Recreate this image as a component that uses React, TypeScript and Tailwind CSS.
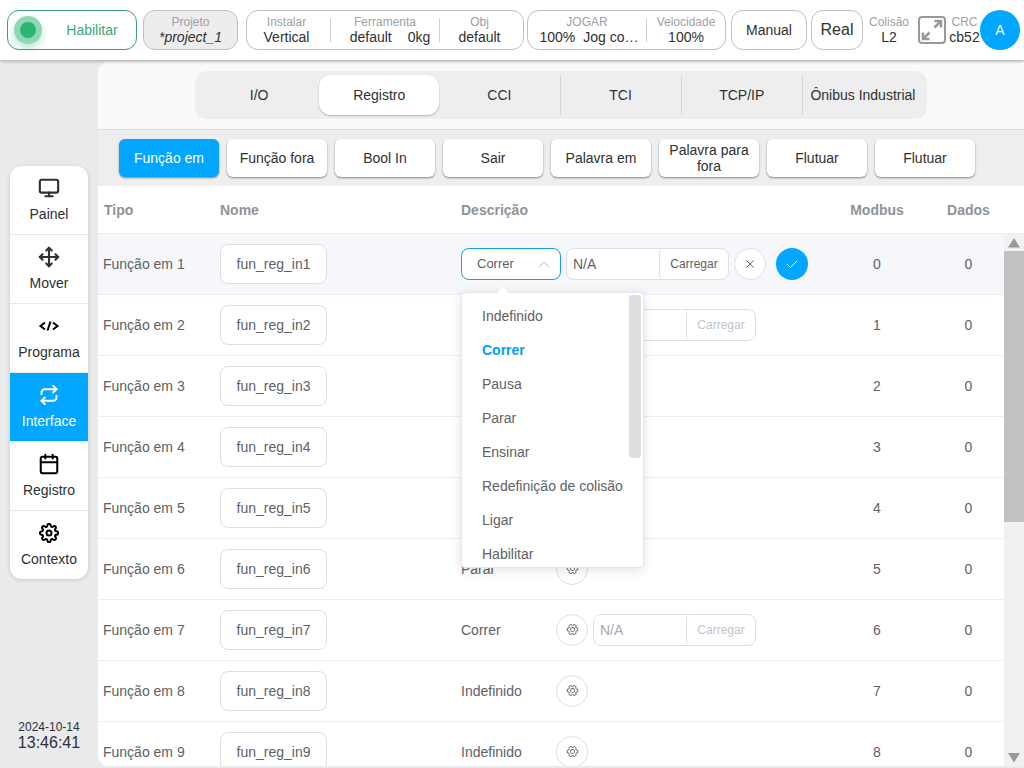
import { useState } from 'react'
import type { ReactNode } from 'react'
import { FiCalendar, FiMonitor, FiMove, FiRepeat, FiSettings } from 'react-icons/fi'

interface Register {
  id: number
  func?: string
  loadable?: boolean
}

const registers: Register[] = [
  { id: 1, func: 'Correr', loadable: true },
  { id: 2, loadable: true },
  { id: 3 },
  { id: 4 },
  { id: 5 },
  { id: 6, func: 'Parar' },
  { id: 7, func: 'Correr', loadable: true },
  { id: 8, func: 'Indefinido' },
  { id: 9, func: 'Indefinido' },
]

const functions = [
  'Indefinido',
  'Correr',
  'Pausa',
  'Parar',
  'Ensinar',
  'Redefinição de colisão',
  'Ligar',
  'Habilitar',
]

const mainTabs = ['I/O', 'Registro', 'CCI', 'TCI', 'TCP/IP', 'Ônibus Industrial']

const subTabs = [
  'Função em',
  'Função fora',
  'Bool In',
  'Sair',
  'Palavra em',
  'Palavra para fora',
  'Flutuar',
  'Flutuar',
]

function CodeIcon() {
  return (
    <svg width="22" height="22" viewBox="0 0 22 22" fill="none" stroke="#000" strokeWidth="2">
      <path d="M7 7.500 2.500 11 7 14.500M15 7.500l4.500 3.500-4.500 3.500M12.500 6.500l-3 9" />
    </svg>
  )
}

const navItems = [
  { label: 'Painel', icon: <FiMonitor size={22} strokeWidth={2.3} /> },
  { label: 'Mover', icon: <FiMove size={22} strokeWidth={2.3} /> },
  { label: 'Programa', icon: <CodeIcon /> },
  { label: 'Interface', icon: <FiRepeat size={20} strokeWidth={2.4} /> },
  { label: 'Registro', icon: <FiCalendar size={22} color="#000" strokeWidth={2.2} /> },
  { label: 'Contexto', icon: <FiSettings size={20} color="#000" strokeWidth={2.4} /> },
]

function GearIcon() {
  return (
    <svg className="rotate-90" width="13" height="13" viewBox="0 0 1024 1024" fill="currentColor">
      <path d="M600.704 64a32 32 0 0 1 30.464 22.208l35.2 109.376c14.784 7.232 28.928 15.36 42.432 24.512l112.384-24.192a32 32 0 0 1 34.432 15.36L944.32 364.8a32 32 0 0 1-4.032 37.504l-77.12 85.12a357 357 0 0 1 0 49.024l77.12 85.248a32 32 0 0 1 4.032 37.504l-88.704 153.6a32 32 0 0 1-34.432 15.296L708.8 803.904c-13.44 9.088-27.648 17.28-42.368 24.512l-35.264 109.376A32 32 0 0 1 600.704 960H423.296a32 32 0 0 1-30.464-22.208L357.696 828.48a352 352 0 0 1-42.56-24.64l-112.32 24.256a32 32 0 0 1-34.432-15.36L79.68 659.2a32 32 0 0 1 4.032-37.504l77.12-85.248a357 357 0 0 1 0-48.896l-77.12-85.248A32 32 0 0 1 79.68 364.8l88.704-153.6a32 32 0 0 1 34.432-15.296l112.32 24.256c13.568-9.152 27.776-17.408 42.56-24.64l35.2-109.312A32 32 0 0 1 423.232 64zm-23.424 64H446.72l-36.352 113.088-24.512 11.968a294 294 0 0 0-34.816 20.096l-22.656 15.36-116.224-25.088-65.28 113.152 79.68 88.192-1.92 27.136a293 293 0 0 0 0 40.192l1.92 27.136-79.808 88.192 65.344 113.152 116.224-25.024 22.656 15.296a294 294 0 0 0 34.816 20.096l24.512 11.968L446.72 896h130.688l36.48-113.152 24.448-11.904a288 288 0 0 0 34.752-20.096l22.592-15.296 116.288 25.024 65.28-113.152-79.744-88.192 1.92-27.136a293 293 0 0 0 0-40.256l-1.92-27.136 79.808-88.128-65.344-113.152-116.288 24.96-22.592-15.232a288 288 0 0 0-34.752-20.096l-24.448-11.904L577.344 128zM512 320a192 192 0 1 1 0 384 192 192 0 0 1 0-384m0 64a128 128 0 1 0 0 256 128 128 0 0 0 0-256" />
    </svg>
  )
}

function Field({ label, children }: { label: string; children: ReactNode }) {
  return (
    <div className="flex flex-col items-center">
      <span className="text-xs leading-[14px] text-[#a0a1a5]">{label}</span>
      <span className="flex whitespace-nowrap text-sm leading-4 text-[#303133]">{children}</span>
    </div>
  )
}

function Header() {
  return (
    <header className="relative z-10 flex h-[60px] shrink-0 items-center bg-white pr-1 pl-[7px] text-[#303133] shadow-[0_1px_4px_rgba(0,0,0,0.3)]">
      <button className="flex h-10 w-[130px] items-center rounded-xl border border-[#3ba272] pl-1.5 text-sm text-[#3fa878]">
        <span className="flex h-7 w-7 items-center justify-center rounded-full bg-[#8fd8b6] shadow-[0_4px_8px_rgba(43,182,115,0.35)]">
          <span className="h-4 w-4 rounded-full bg-[#2bb673]" />
        </span>
        <span className="flex-1 pl-1.5">Habilitar</span>
      </button>
      <button className="ml-1.5 h-10 w-[95px] rounded-xl border border-[#c0c0c0] bg-[#ededed]">
        <Field label="Projeto">
          <i>*project_1</i>
        </Field>
      </button>
      <div className="ml-2 flex h-10 flex-1 items-center rounded-xl border border-[#c0c0c0]">
        <div className="flex-1 pr-1">
          <Field label="Instalar">Vertical</Field>
        </div>
        <span className="h-6 w-px bg-[#d0d0d0]" />
        <div className="w-[108px]">
          <Field label="Ferramenta">
            <span className="pl-2.5">default</span>
            <span className="pl-4">0kg</span>
          </Field>
        </div>
        <span className="h-6 w-px bg-[#d0d0d0]" />
        <div className="flex-1 pr-1">
          <Field label="Obj">default</Field>
        </div>
      </div>
      <div className="ml-[3px] flex h-10 w-[199px] items-center rounded-xl border border-[#c0c0c0]">
        <div className="flex-1">
          <Field label="JOGAR">
            <span className="pl-1">100%</span>
            <span className="pl-2">Jog co…</span>
          </Field>
        </div>
        <span className="h-6 w-px bg-[#d0d0d0]" />
        <div className="w-[78px]">
          <Field label="Velocidade">100%</Field>
        </div>
      </div>
      <button className="ml-[5px] h-10 w-[76px] rounded-xl border border-[#c0c0c0] text-sm">Manual</button>
      <button className="ml-1 h-10 w-[52px] rounded-xl border border-[#c0c0c0] text-base">Real</button>
      <div className="w-[52px]">
        <Field label="Colisão">L2</Field>
      </div>
      <button aria-label="Tela cheia" className="mx-[3px]">
        <svg width="28" height="28" viewBox="0 0 28 28" fill="none" stroke="#999" strokeWidth="2">
          <rect x="1" y="1" width="26" height="26" rx="3" />
          <path d="M16.500 11.500 23 5M5 23l6.500-6.500" strokeWidth="2.500" />
          <path d="M16.500 5H23v6.500M5 16.500V23h6.500" strokeWidth="2.500" />
        </svg>
      </button>
      <div className="w-[31px]">
        <Field label="CRC">cb52</Field>
      </div>
      <button className="h-10 w-10 rounded-full bg-[#00a6ff] text-sm text-white">A</button>
    </header>
  )
}

function Sidebar() {
  return (
    <aside className="flex w-[98px] shrink-0 flex-col px-2.5 pt-[106px] pb-4">
      <nav className="overflow-hidden rounded-xl bg-white shadow-[0_1px_4px_rgba(0,0,0,0.15)]">
        {navItems.map((item) => (
          <button
            key={item.label}
            className={`flex h-[69px] w-full flex-col items-center gap-[5px] border-b border-[#e6e8ec] pt-[11px] text-sm last:h-[68px] last:border-b-0 ${
              item.label === 'Interface' ? 'bg-[#00a6ff] text-white' : 'text-[#303133]'
            }`}
          >
            <span className="flex h-[22px] items-center">{item.icon}</span>
            {item.label}
          </button>
        ))}
      </nav>
      <div className="mt-auto text-center text-[#303133]">
        <p className="text-xs leading-[14px]">2024-10-14</p>
        <p className="text-base leading-[18px]">13:46:41</p>
      </div>
    </aside>
  )
}

function LoadGroup({ id, active }: { id: number; active?: boolean }) {
  return (
    <div className="flex h-8 w-[163px] overflow-hidden rounded-lg border border-[#dcdfe6] bg-white">
      <input
        type="text"
        aria-label={`Programa ${id}`}
        defaultValue="N/A"
        disabled={!active}
        className={`w-[92px] pl-1.5 text-sm outline-none ${active ? 'text-[#606266]' : 'text-[#a8abb2]'}`}
      />
      <button
        disabled={!active}
        className={`flex-1 rounded-l-sm border-l border-[#dcdfe6] text-xs ${
          active ? 'text-[#606266]' : 'text-[#c0c4cc]'
        }`}
      >
        Carregar
      </button>
    </div>
  )
}

function FunctionSelect({ value, onChange }: { value: string; onChange: (value: string) => void }) {
  return (
    <div className="relative w-[100px]">
      <select
        aria-label="Função"
        value={value}
        onChange={(e) => onChange(e.target.value)}
        className="block h-8 w-full appearance-none rounded-lg border border-[#1b9de2] bg-white pt-0.5 pl-[15px] text-[13px] text-[#606266] outline-none"
      >
        {functions.map((name) => (
          <option key={name}>{name}</option>
        ))}
      </select>
      <svg
        className="pointer-events-none absolute top-2.5 right-[11px]"
        width="12"
        height="12"
        viewBox="0 0 12 12"
        fill="none"
        stroke="#b4b8c0"
      >
        <path d="M1 9l5-5L11 9" />
      </svg>

      {/* Dropdown */}
      <div className="absolute top-11 left-0 z-20 w-[183px] rounded-sm border border-[#e4e7ed] bg-white shadow-[0_2px_12px_rgba(0,0,0,0.12)]">
        <span className="absolute -top-1 left-9 h-2.5 w-2.5 rotate-45 bg-white" />
        <ul role="listbox" className="h-[274px] overflow-hidden py-1.5">
          {functions.map((name) => (
            <li
              key={name}
              role="option"
              aria-selected={name === value}
              onClick={() => onChange(name)}
              className={`h-[34px] cursor-pointer whitespace-nowrap pl-5 text-sm leading-[34px] ${
                name === value ? 'font-bold text-[#00a0f8]' : 'text-[#606266]'
              }`}
            >
              {name}
            </li>
          ))}
        </ul>
        <span className="absolute top-0.5 right-0.5 h-[163px] w-3 rounded-sm bg-[#dddedf]" />
      </div>
    </div>
  )
}

function RegisterTable() {
  const [selected, setSelected] = useState('Correr')

  return (
    <div className="flex min-h-0 flex-1">
      <table className="h-min flex-1 table-fixed border-collapse text-sm text-[#606266]">
        <thead>
          <tr className="h-[47px] border-b border-[#ebeef5] text-left text-[#909399]">
            <th className="w-[122px] pt-0.5 pl-1.5">Tipo</th>
            <th className="w-[241px] pt-0.5">Nome</th>
            <th className="pt-0.5">Descrição</th>
            <th className="w-[112px] pt-0.5 text-center">Modbus</th>
            <th className="w-[71px] pt-0.5 text-center">Dados</th>
          </tr>
        </thead>
        <tbody>
          {registers.map((reg) => {
            const editing = reg.id === 1
            return (
              <tr key={reg.id} className={`h-[61px] border-b border-[#ebeef5] ${editing ? 'bg-[#f5f7fa]' : ''}`}>
                <td className="pl-[5px]">Função em {reg.id}</td>
                <td>
                  <button className="block h-10 w-[107px] rounded-lg border border-[#dcdfe6] bg-white">
                    fun_reg_in{reg.id}
                  </button>
                </td>
                <td>
                  {editing ? (
                    <div className="flex items-center">
                      <FunctionSelect value={selected} onChange={setSelected} />
                      <div className="ml-[5px]">
                        <LoadGroup id={reg.id} active />
                      </div>
                      <button
                        aria-label="Cancelar"
                        className="ml-[5px] flex h-8 w-8 items-center justify-center rounded-full border border-[#dcdfe6] bg-white"
                      >
                        <svg width="10" height="10" viewBox="0 0 10 10" stroke="currentColor">
                          <path d="M1.500 1.500l7 7M8.500 1.500l-7 7" />
                        </svg>
                      </button>
                      <button
                        aria-label="Confirmar"
                        className="ml-2.5 flex h-8 w-8 items-center justify-center rounded-full bg-[#00a6ff] text-white"
                      >
                        <svg width="12" height="12" viewBox="0 0 12 12" fill="none" stroke="currentColor">
                          <path d="M1 6l3.500 3.500L11 3" />
                        </svg>
                      </button>
                    </div>
                  ) : (
                    <div className="flex items-center">
                      <span className="w-[95px]">{reg.func}</span>
                      <button
                        aria-label={`Configurar ${reg.id}`}
                        className="mr-[5px] flex h-8 w-8 items-center justify-center rounded-full border border-[#dcdfe6]"
                      >
                        <GearIcon />
                      </button>
                      {reg.loadable && <LoadGroup id={reg.id} />}
                    </div>
                  )}
                </td>
                <td className="text-center">{reg.id - 1}</td>
                <td className="text-center">0</td>
              </tr>
            )
          })}
        </tbody>
      </table>

      {/* Scrollbar */}
      <div className="flex w-5 shrink-0 flex-col">
        <div className="h-12 border-b border-[#ebeef5]" />
        <div className="flex min-h-0 flex-1 flex-col items-center bg-[#f1f1f1]">
          <svg className="shrink-0" width="20" height="17" viewBox="0 0 20 17" fill="#989898">
            <path d="M10 4l6 9.500H4z" />
          </svg>
          <div className="h-[271px] w-full bg-[#c1c1c1]" />
          <svg className="mt-auto shrink-0" width="20" height="17" viewBox="0 0 20 17" fill="#989898">
            <path d="M10 13.500l6-9.500H4z" />
          </svg>
        </div>
      </div>
    </div>
  )
}

export default function App() {
  const [tab, setTab] = useState(1)
  const [subTab, setSubTab] = useState(0)

  return (
    <div className="flex h-screen flex-col overflow-hidden bg-[#e9eaec] font-['Liberation_Sans',Arial,sans-serif]">
      <Header />
      <div className="flex min-h-0 flex-1">
        <Sidebar />
        <main className="mt-0.5 mb-0.5 flex min-w-0 flex-1 flex-col overflow-hidden rounded-l-[10px] bg-white">
          <div className="flex justify-center border-b border-[#dcdcdc] bg-[#fafafa] pt-[9px] pb-2.5">
            <div className="flex h-12 w-[732px] rounded-xl bg-[#eee] p-1">
              {mainTabs.map((name, i) => (
                <button
                  key={name}
                  onClick={() => setTab(i)}
                  className={`flex-1 whitespace-nowrap text-sm text-[#303133] ${
                    i === tab
                      ? 'rounded-xl bg-white shadow-[0_1px_2px_rgba(0,0,0,0.25)]'
                      : i > tab + 1
                        ? 'border-l border-[#d8d8d8]'
                        : ''
                  }`}
                >
                  {name}
                </button>
              ))}
            </div>
          </div>
          <div className="flex gap-2 bg-[#eee] px-[21px] py-[9px]">
            {subTabs.map((name, i) => (
              <button
                key={i}
                onClick={() => setSubTab(i)}
                className={`h-[38px] w-[100px] rounded-md px-2 text-sm leading-4 shadow-[0_1px_2px_rgba(0,0,0,0.45)] ${
                  i === subTab ? 'bg-[#00a6ff] font-medium text-white' : 'bg-white text-[#303133]'
                }`}
              >
                {name}
              </button>
            ))}
          </div>
          <RegisterTable />
        </main>
      </div>
    </div>
  )
}
